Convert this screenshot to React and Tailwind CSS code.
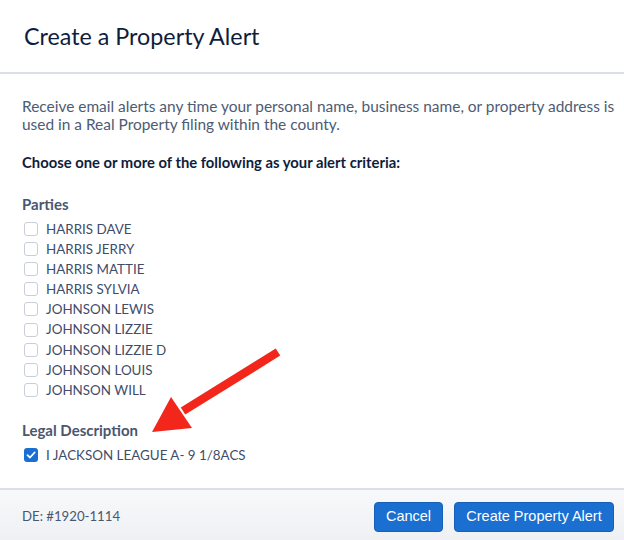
import React from "react";

const parties = [
  "HARRIS DAVE",
  "HARRIS JERRY",
  "HARRIS MATTIE",
  "HARRIS SYLVIA",
  "JOHNSON LEWIS",
  "JOHNSON LIZZIE",
  "JOHNSON LIZZIE D",
  "JOHNSON LOUIS",
  "JOHNSON WILL",
];

function Box({ checked }) {
  if (checked) {
    return (
      <span className="w-[14px] h-[14px] rounded-[3px] bg-[#1a6fd1] flex items-center justify-center shrink-0">
        <svg width="10" height="10" viewBox="0 0 10 10">
          <path d="M1.5 5.2 L4 7.5 L8.6 2.5" fill="none" stroke="white" strokeWidth="1.8" strokeLinecap="round" strokeLinejoin="round" />
        </svg>
      </span>
    );
  }
  return <span className="w-[14px] h-[14px] rounded-[3px] border border-[#c9ced8] bg-white shrink-0" />;
}

function Row({ label, checked }) {
  return (
    <div className="flex items-center gap-[8px] h-[20.1px] pl-[2px]">
      <Box checked={checked} />
      <span className="text-[13.4px] text-[#3f4d69]">{label}</span>
    </div>
  );
}

export default function App() {
  return (
    <div className="relative w-[624px] h-[540px] bg-white flex flex-col overflow-hidden" style={{ fontFamily: "Lato, 'Open Sans', sans-serif" }}>
      <div className="h-[74px] border-b-2 border-[#dadfe9] flex items-center pl-6 shrink-0">
        <h1 className="text-[23.3px] text-[#0f1d3d] leading-none mt-[2px]">Create a Property Alert</h1>
      </div>
      <div className="flex-1 pl-[22px] pr-[4px] pt-[22px]">
        <p className="text-[15.45px] leading-[18px] text-[#4d5b74] mt-[1px]">
          Receive email alerts any time your personal name, business name, or property address is used in a Real Property filing within the county.
        </p>
        <p className="mt-[20px] text-[14.8px] font-bold text-[#0f1d3d] leading-[18px]">
          Choose one or more of the following as your alert criteria:
        </p>
        <p className="mt-[24px] text-[15px] font-bold text-[#4a5670] leading-[18px]">Parties</p>
        <div className="mt-[6px] flex flex-col">
          {parties.map((p) => (
            <Row key={p} label={p} />
          ))}
        </div>
        <p className="mt-[21px] text-[15px] font-bold text-[#4a5670] leading-[18px]">Legal Description</p>
        <div className="mt-[6px]">
          <Row label="I JACKSON LEAGUE A- 9 1/8ACS" checked />
        </div>
      </div>
      <div className="h-[52px] shrink-0 border-t-2 border-[#dadfe9] bg-gradient-to-b from-[#f8f9fb] to-[#eef0f3] flex items-center justify-between pl-[22px] pr-[10px]">
        <span className="text-[13.2px] text-[#4a5670] mt-[4px]">DE: #1920-1114</span>
        <div className="flex gap-[11px] mt-[4px]" style={{ fontFamily: "'Liberation Sans', Arial, sans-serif" }}>
          <button className="h-[30px] w-[69px] flex items-center justify-center rounded-[4px] bg-[#1a6fd1] border border-[#155fb6] text-white text-[14.5px]">Cancel</button>
          <button className="h-[30px] w-[160px] flex items-center justify-center rounded-[4px] bg-[#1a6fd1] border border-[#155fb6] text-white text-[14.5px]">Create Property Alert</button>
        </div>
      </div>
      <svg className="absolute left-0 top-0 pointer-events-none" width="624" height="540">
        <line x1="278" y1="352" x2="183" y2="411" stroke="#f3261b" strokeWidth="8.5" />
        <polygon points="152,432 171,397 192,428" fill="#f3261b" />
      </svg>
    </div>
  );
}
